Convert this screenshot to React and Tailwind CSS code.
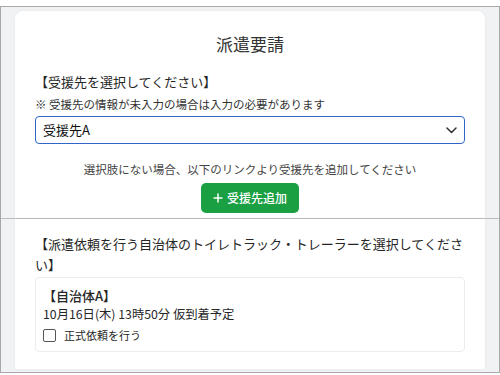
export default function App() {
  return (
    <div className="w-[500px] h-[375px] bg-white overflow-hidden" style={{ fontFamily: '"Noto Sans CJK JP", "Noto Sans", sans-serif' }}>
      <div className="mt-[6px] h-[367px] border border-[#a8a8a8] bg-[#f1f2f4] flex flex-col text-[#262626]">
        <div className="px-[14px] pt-[4px]">
          <div className="bg-white rounded-t-[8px] px-[20px] shadow-[0_0_3px_rgba(0,0,0,0.06)] flex flex-col">
            <h1 className="pt-[21px] text-center text-[17px] leading-[24px] text-[#333]">派遣要請</h1>
            <p className="mt-[16px] text-[13px] leading-[20px]">【受援先を選択してください】</p>
            <p className="mt-[4px] text-[11.5px] leading-[16px] text-[#333]">※ 受援先の情報が未入力の場合は入力の必要があります</p>
            <div className="mt-[4px] h-[28px] rounded-[4px] border-[1.5px] border-[#2f66c8] flex items-center justify-between pl-[7px] pr-[7px]">
              <span className="text-[13px] text-[#111]">受援先A</span>
              <svg width="11" height="7" viewBox="0 0 11 7" fill="none" stroke="#333" strokeWidth="1.5" strokeLinecap="round" strokeLinejoin="round">
                <polyline points="1,1 5.5,5.5 10,1" />
              </svg>
            </div>
            <p className="mt-[17px] text-center text-[11.5px] leading-[16px] text-[#444]">選択肢にない場合、以下のリンクより受援先を追加してください</p>
            <div className="mt-[6px] mb-[5px] flex justify-center">
              <button className="h-[30px] w-[98px] rounded-[5px] bg-[#1aa043] text-white text-[12px] font-medium flex items-center justify-center gap-[4px]">
                <svg width="10" height="10" viewBox="0 0 10 10" stroke="white" strokeWidth="1.5">
                  <line x1="5" y1="0.5" x2="5" y2="9.5" />
                  <line x1="0.5" y1="5" x2="9.5" y2="5" />
                </svg>
                <span>受援先追加</span>
              </button>
            </div>
          </div>
        </div>
        <div className="border-t border-[#bdbdbd] px-[14px] flex-1 flex flex-col">
          <div className="bg-white px-[20px] pt-[14px] pb-[17px] shadow-[0_0_3px_rgba(0,0,0,0.06)]">
            <p className="text-[13px] leading-[21px]">【派遣依頼を行う自治体のトイレトラック・トレーラーを選択してください】</p>
            <div className="mt-[2px] h-[75px] border border-[#ececec] rounded-[4px] px-[7px] pt-[8px]">
              <p className="text-[13px] leading-[19px] font-medium">【自治体A】</p>
              <p className="text-[12.3px] leading-[19px]">10月16日(木) 13時50分 仮到着予定</p>
              <label className="mt-[2px] flex items-center gap-[8px]">
                <span className="w-[13px] h-[13px] border border-[#555] rounded-[2px] bg-white" />
                <span className="text-[11px] leading-[18px]">正式依頼を行う</span>
              </label>
            </div>
          </div>
        </div>
      </div>
    </div>
  )
}
